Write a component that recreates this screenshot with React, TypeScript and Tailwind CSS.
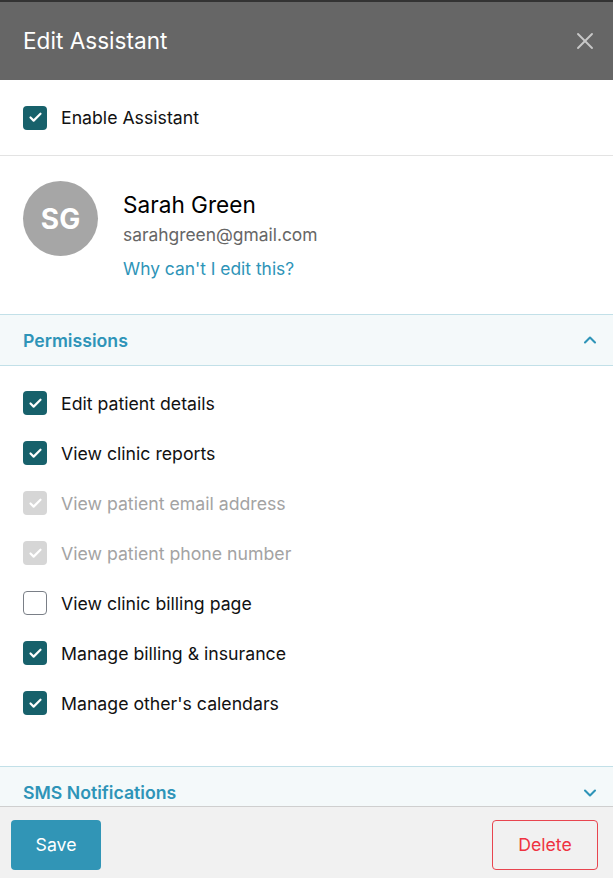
import { Check, ChevronDown, ChevronUp, X } from "lucide-react";

type Perm = { label: string; state: "on" | "off" | "disabled" };

const perms: Perm[] = [
  { label: "Edit patient details", state: "on" },
  { label: "View clinic reports", state: "on" },
  { label: "View patient email address", state: "disabled" },
  { label: "View patient phone number", state: "disabled" },
  { label: "View clinic billing page", state: "off" },
  { label: "Manage billing & insurance", state: "on" },
  { label: "Manage other's calendars", state: "on" },
];

function Box({ state }: { state: Perm["state"] }) {
  if (state === "off") {
    return <div className="w-6 h-6 rounded-[4px] border border-[#7a7f87] bg-white shrink-0" />;
  }
  return (
    <div
      className={`w-6 h-6 rounded-[4px] flex items-center justify-center shrink-0 ${
        state === "on" ? "bg-[#17616b]" : "bg-[#d6d6d6]"
      }`}
    >
      <Check size={15} strokeWidth={3.5} className="text-white" />
    </div>
  );
}

function Row({ p }: { p: Perm }) {
  return (
    <div className="flex items-center gap-[14px] h-[50px]">
      <Box state={p.state} />
      <span className={`text-[17.7px] pt-[2px] ${p.state === "disabled" ? "text-[#a3a3a3]" : "text-[#111]"}`}>
        {p.label}
      </span>
    </div>
  );
}

export default function App() {
  return (
    <div className="w-[613px] h-[878px] flex flex-col bg-white overflow-hidden font-['Inter',sans-serif]">
      <div className="h-[2px] bg-[#333]" />
      <div className="h-[78px] bg-[#666] flex items-center justify-between pl-[23px] pr-[14px] shrink-0">
        <h1 className="text-white text-[22.6px]">Edit Assistant</h1>
        <X size={28} strokeWidth={1.6} className="text-[#c8c8c8]" />
      </div>

      <div className="flex-1 overflow-hidden flex flex-col">
        <div className="h-[76px] flex items-center gap-[14px] px-[23px] border-b border-[#e3e3e3] shrink-0">
          <Box state="on" />
          <span className="text-[17.7px] pt-[2px] text-[#111]">Enable Assistant</span>
        </div>

        <div className="flex gap-[25px] px-[23px] pt-[25px] h-[158px] shrink-0">
          <div className="w-[75px] h-[75px] rounded-full bg-[#a6a6a6] flex items-center justify-center text-white text-[28px] font-bold">
            SG
          </div>
          <div className="flex flex-col">
            <div className="text-[22.6px] text-black leading-[30px] mt-[9px]">Sarah Green</div>
            <div className="text-[17.4px] text-[#666] leading-[26px] mt-[2px]">sarahgreen@gmail.com</div>
            <div className="text-[17.4px] text-[#2e94b8] leading-[26px] mt-[8px]">Why can't I edit this?</div>
          </div>
        </div>

        <div className="h-[52px] bg-[#f4f9fa] border-y border-[#c2e0e8] flex items-center justify-between pl-[23px] pr-[13px] shrink-0">
          <span className="text-[17.7px] pt-[2px] font-semibold text-[#2e94b8]">Permissions</span>
          <ChevronUp size={20} strokeWidth={2.5} className="text-[#2e94b8]" />
        </div>

        <div className="px-[23px] pt-[12px] pb-[38px] shrink-0">
          {perms.map((p) => (
            <Row key={p.label} p={p} />
          ))}
        </div>

        <div className="h-[52px] bg-[#f4f9fa] border-t border-[#c2e0e8] flex items-center justify-between pl-[23px] pr-[13px] shrink-0">
          <span className="text-[17.7px] pt-[2px] font-semibold text-[#2e94b8]">SMS Notifications</span>
          <ChevronDown size={20} strokeWidth={2.5} className="text-[#2e94b8]" />
        </div>
      </div>

      <div className="h-[72px] shrink-0 bg-[#f1f1f1] border-t border-[#cfcfcf] flex items-start justify-between pl-[11px] pr-[15px] pt-[13px]">
        <button className="w-[90px] h-[50px] rounded-[4px] bg-[#3195b6] text-white text-[17.7px]">Save</button>
        <button className="w-[106px] h-[50px] rounded-[4px] border border-[#e8454f] text-[#ef3340] text-[17.7px] bg-transparent">
          Delete
        </button>
      </div>
    </div>
  );
}
